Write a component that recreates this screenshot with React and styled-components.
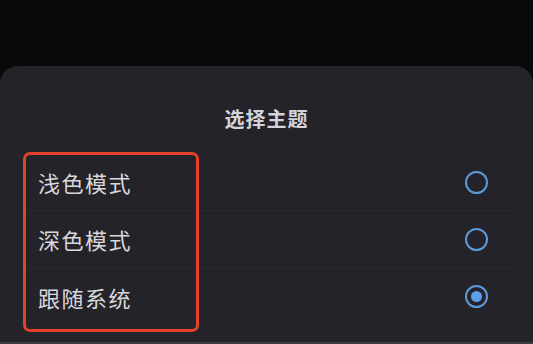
import styled, { createGlobalStyle } from 'styled-components'

const Global = createGlobalStyle`
    html, body {
        margin: 0;
        padding: 0;
        background: #09090a;
        font-family: "Noto Sans CJK SC", "Noto Sans", sans-serif;
    }
`

const Screen = styled.div`
    width: 533px;
    height: 344px;
    overflow: hidden;
    display: flex;
    flex-direction: column;
    padding-top: 66px;
    box-sizing: border-box;
`

const Sheet = styled.div`
    position: relative;
    flex: 1;
    background: #242329;
    border-radius: 18px 18px 0 0;
    display: flex;
    flex-direction: column;
    border-bottom: 2px solid #3b3b41;
`

const Title = styled.h2`
    margin: 0;
    padding-top: 38px;
    height: 30px;
    line-height: 30px;
    text-align: center;
    font-size: 20px;
    font-weight: 700;
    letter-spacing: 1px;
    color: #d4d3d9;
`

const List = styled.div`
    display: flex;
    flex-direction: column;
    margin: 20px 21px 0 28px;
`

const Row = styled.div`
    display: flex;
    align-items: center;
    justify-content: space-between;
    height: 57px;
    padding: 0 24px 0 10px;
    border-bottom: ${({ last }) => (last ? 'none' : '1px solid #2c2b31')};
    box-sizing: border-box;
`

const Label = styled.span`
    font-size: 22px;
    color: #d8d7dc;
    letter-spacing: 1.5px;
`

const Radio = styled.span`
    width: 23px;
    height: 23px;
    box-sizing: border-box;
    border-radius: 50%;
    border: 2.5px solid #5c9ad8;
    display: flex;
    align-items: center;
    justify-content: center;
    &::after {
        content: '';
        width: 11px;
        height: 11px;
        border-radius: 50%;
        background: ${({ checked }) => (checked ? '#5aa0ea' : 'transparent')};
    }
`

const Highlight = styled.div`
    position: absolute;
    left: 23px;
    top: 86px;
    width: 176px;
    height: 180px;
    box-sizing: border-box;
    border: 3px solid #e6402b;
    border-radius: 7px;
    pointer-events: none;
`

const options = [
    { label: '浅色模式', checked: false },
    { label: '深色模式', checked: false },
    { label: '跟随系统', checked: true },
]

export default function App() {
    return (
        <Screen>
            <Global />
            <Sheet>
                <Title>选择主题</Title>
                <List>
                    {options.map((o, i) => (
                        <Row key={o.label} last={i === options.length - 1}>
                            <Label>{o.label}</Label>
                            <Radio checked={o.checked} />
                        </Row>
                    ))}
                </List>
                <Highlight />
            </Sheet>
        </Screen>
    )
}
